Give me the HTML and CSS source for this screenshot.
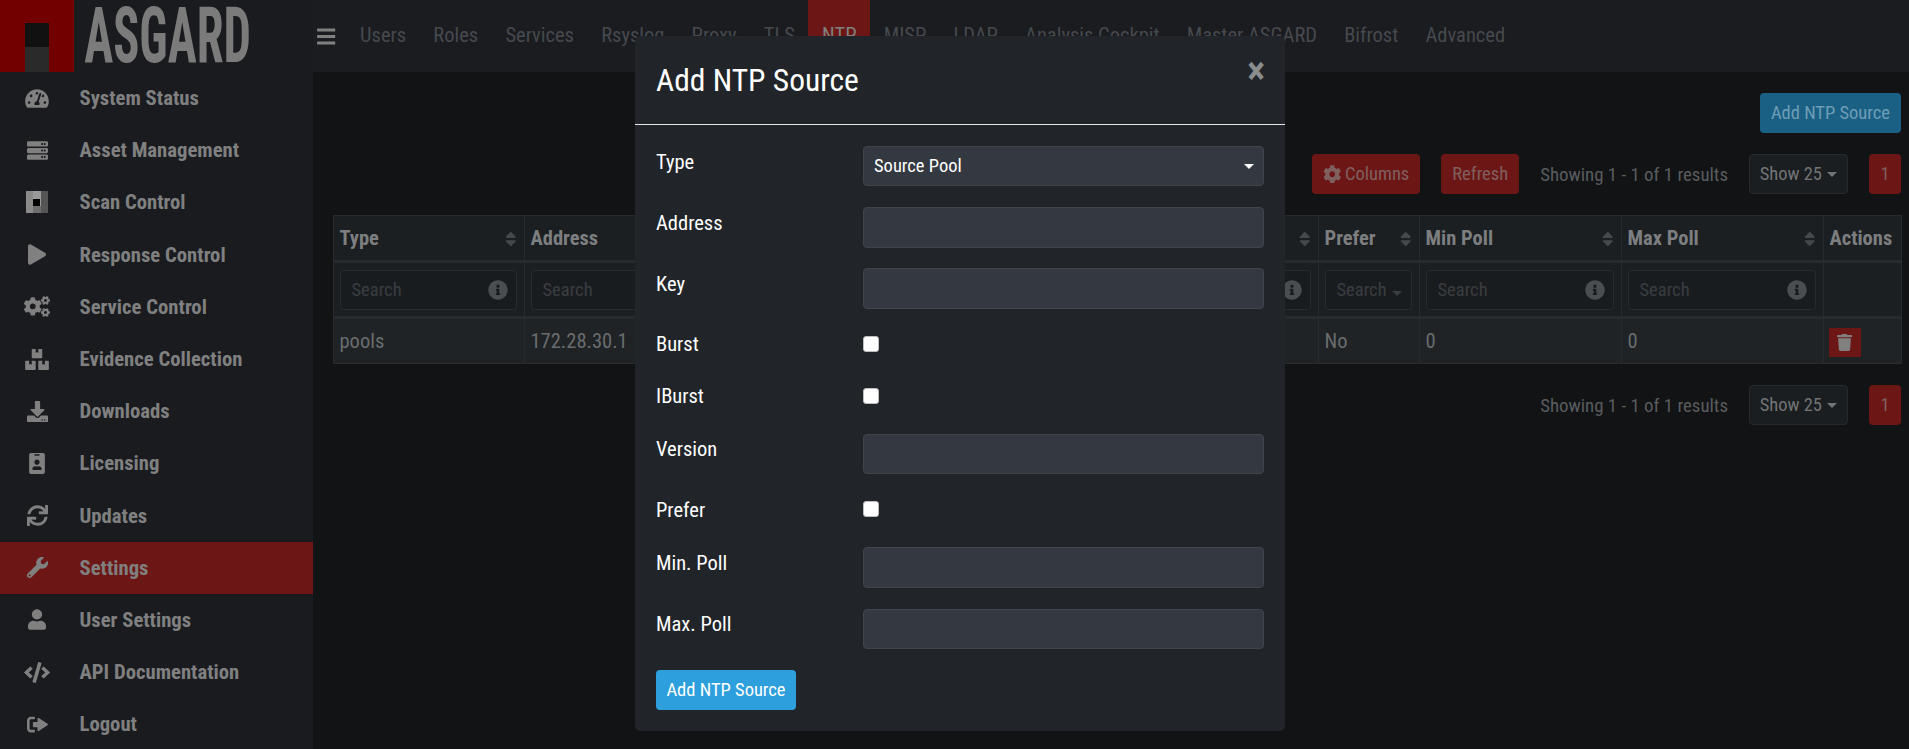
FILE: index.html
```html
<!DOCTYPE html>
<html lang="en">
<head>
<meta charset="utf-8">
<title>ASGARD - NTP</title>
<link rel="stylesheet" href="styles.css">
</head>
<body>
<svg class="defs" aria-hidden="true">
  <symbol id="i-gauge" viewBox="0 0 576 512"><path d="M288 32C128.94 32 0 160.94 0 320c0 52.8 14.25 102.26 39.06 144.8 5.61 9.62 16.3 15.2 27.44 15.2h443c11.14 0 21.83-5.58 27.44-15.2C561.75 422.26 576 372.8 576 320c0-159.06-128.94-288-288-288zm0 64c14.71 0 26.58 10.13 30.32 23.65-1.11 2.26-2.64 4.23-3.45 6.67l-9.22 27.67c-5.13 3.49-10.97 6.01-17.64 6.01-17.67 0-32-14.33-32-32S270.33 96 288 96zM96 384c-17.67 0-32-14.33-32-32s14.33-32 32-32 32 14.33 32 32-14.33 32-32 32zm48-160c-17.67 0-32-14.33-32-32s14.33-32 32-32 32 14.33 32 32-14.33 32-32 32zm246.77-72.41l-61.33 184C343.13 347.33 352 364.54 352 384c0 11.72-3.38 22.55-8.88 32H232.88c-5.5-9.45-8.88-20.28-8.88-32 0-33.94 26.5-61.43 59.9-63.59l61.34-184.01c4.17-12.56 17.73-19.45 30.36-15.17 12.57 4.19 19.35 17.79 15.17 30.36zm14.66 57.2l15.52-46.55c3.47-1.29 7.13-2.23 11.05-2.23 17.67 0 32 14.33 32 32s-14.33 32-32 32c-11.38-.01-20.89-6.28-26.57-15.22zM480 384c-17.67 0-32-14.33-32-32s14.33-32 32-32 32 14.33 32 32-14.33 32-32 32z"/></symbol>
  <symbol id="i-server" viewBox="0 0 512 512"><path d="M480 160H32c-17.673 0-32-14.327-32-32V64c0-17.673 14.327-32 32-32h448c17.673 0 32 14.327 32 32v64c0 17.673-14.327 32-32 32zm-48-88c-13.255 0-24 10.745-24 24s10.745 24 24 24 24-10.745 24-24-10.745-24-24-24zm-64 0c-13.255 0-24 10.745-24 24s10.745 24 24 24 24-10.745 24-24-10.745-24-24-24zm112 248H32c-17.673 0-32-14.327-32-32v-64c0-17.673 14.327-32 32-32h448c17.673 0 32 14.327 32 32v64c0 17.673-14.327 32-32 32zm-48-88c-13.255 0-24 10.745-24 24s10.745 24 24 24 24-10.745 24-24-10.745-24-24-24zm-64 0c-13.255 0-24 10.745-24 24s10.745 24 24 24 24-10.745 24-24-10.745-24-24-24zm112 248H32c-17.673 0-32-14.327-32-32v-64c0-17.673 14.327-32 32-32h448c17.673 0 32 14.327 32 32v64c0 17.673-14.327 32-32 32zm-48-88c-13.255 0-24 10.745-24 24s10.745 24 24 24 24-10.745 24-24-10.745-24-24-24zm-64 0c-13.255 0-24 10.745-24 24s10.745 24 24 24 24-10.745 24-24-10.745-24-24-24z"/></symbol>
  <symbol id="i-play" viewBox="0 0 448 512"><path d="M424.4 214.7L72.4 6.6C43.8-10.3 0 6.1 0 47.9V464c0 37.5 40.7 60.1 72.4 41.3l352-208c31.4-18.5 31.5-64.1 0-82.6z"/></symbol>
  <symbol id="i-cogs" viewBox="0 0 640 512"><path d="M512.1 191l-8.2 14.3c-3 5.3-9.4 7.5-15.1 5.4-11.8-4.4-22.6-10.7-32.1-18.6-4.6-3.8-5.8-10.5-2.8-15.7l8.2-14.3c-6.9-8-12.3-17.3-15.9-27.4h-16.5c-6 0-11.2-4.3-12.2-10.3-2-12-2.1-24.6 0-37.1 1-6 6.2-10.4 12.2-10.4h16.5c3.6-10.1 9-19.4 15.9-27.4l-8.2-14.3c-3-5.2-1.9-11.9 2.8-15.7 9.5-7.9 20.4-14.2 32.1-18.6 5.7-2.1 12.1.1 15.1 5.4l8.2 14.3c10.5-1.9 21.2-1.9 31.7 0L552 6.3c3-5.3 9.4-7.5 15.1-5.4 11.8 4.4 22.6 10.7 32.1 18.6 4.6 3.8 5.8 10.5 2.8 15.7l-8.2 14.3c6.9 8 12.3 17.3 15.9 27.4h16.5c6 0 11.2 4.3 12.2 10.3 2 12 2.1 24.6 0 37.1-1 6-6.2 10.4-12.2 10.4h-16.5c-3.6 10.1-9 19.4-15.9 27.4l8.2 14.3c3 5.2 1.9 11.9-2.8 15.7-9.5 7.9-20.4 14.2-32.1 18.6-5.7 2.1-12.1-.1-15.1-5.4l-8.2-14.3c-10.4 1.9-21.2 1.9-31.7 0zm-10.5-58.8c38.5 29.6 82.4-14.3 52.8-52.8-38.5-29.7-82.4 14.3-52.8 52.8zM386.3 286.1l33.7 16.8c10.1 5.8 14.5 18.1 10.5 29.1-8.9 24.2-26.4 46.4-42.6 65.8-7.4 8.9-20.2 11.1-30.3 5.3l-29.1-16.8c-16 13.7-34.6 24.6-54.9 31.7v33.6c0 11.6-8.3 21.6-19.7 23.6-24.6 4.2-50.4 4.4-75.9 0-11.5-2-20-11.9-20-23.6V418c-20.3-7.2-38.9-18-54.9-31.7L74 403c-10 5.8-22.9 3.6-30.3-5.3-16.2-19.4-33.3-41.6-42.2-65.7-4-10.9.4-23.2 10.5-29.1l33.3-16.8c-3.9-20.9-3.9-42.4 0-63.4L12 205.8c-10.1-5.8-14.6-18.1-10.5-29 8.9-24.2 26-46.4 42.2-65.8 7.4-8.9 20.2-11.1 30.3-5.3l29.1 16.8c16-13.7 34.6-24.6 54.9-31.7V57.1c0-11.5 8.2-21.5 19.6-23.5 24.6-4.2 50.5-4.4 76-.1 11.5 2 20 11.9 20 23.6v33.6c20.3 7.2 38.9 18 54.9 31.7l29.1-16.8c10-5.8 22.9-3.6 30.3 5.3 16.2 19.4 33.2 41.6 42.1 65.8 4 10.9.1 23.2-10 29.1l-33.7 16.8c3.9 21 3.9 42.5 0 63.5zm-117.6 21.1c59.2-77-28.7-164.9-105.7-105.7-59.2 77 28.7 164.9 105.7 105.7zm243.4 182.7l-8.2 14.3c-3 5.3-9.4 7.5-15.1 5.4-11.8-4.4-22.6-10.7-32.1-18.6-4.6-3.8-5.8-10.5-2.8-15.7l8.2-14.3c-6.9-8-12.3-17.3-15.9-27.4h-16.5c-6 0-11.2-4.3-12.2-10.3-2-12-2.1-24.6 0-37.1 1-6 6.2-10.4 12.2-10.4h16.5c3.6-10.1 9-19.4 15.9-27.4l-8.2-14.3c-3-5.2-1.9-11.9 2.8-15.7 9.5-7.9 20.4-14.2 32.1-18.6 5.7-2.1 12.1.1 15.1 5.4l8.2 14.3c10.5-1.9 21.2-1.9 31.7 0l8.2-14.3c3-5.3 9.4-7.5 15.1-5.4 11.8 4.4 22.6 10.7 32.1 18.6 4.6 3.8 5.8 10.5 2.8 15.7l-8.2 14.3c6.9 8 12.3 17.3 15.9 27.4h16.5c6 0 11.2 4.3 12.2 10.3 2 12 2.1 24.6 0 37.1-1 6-6.2 10.4-12.2 10.4h-16.5c-3.6 10.1-9 19.4-15.9 27.4l8.2 14.3c3 5.2 1.9 11.9-2.8 15.7-9.5 7.9-20.4 14.2-32.1 18.6-5.7 2.1-12.1-.1-15.1-5.4l-8.2-14.3c-10.4 1.9-21.2 1.9-31.7 0zM501.6 431c38.5 29.6 82.4-14.3 52.8-52.8-38.5-29.6-82.4 14.3-52.8 52.8z"/></symbol>
  <symbol id="i-boxes" viewBox="0 0 576 512"><path d="M560 288h-80v96l-32-21.3-32 21.3v-96h-80c-8.8 0-16 7.2-16 16v192c0 8.8 7.2 16 16 16h224c8.8 0 16-7.2 16-16V304c0-8.8-7.2-16-16-16zm-384-64h224c8.8 0 16-7.2 16-16V16c0-8.8-7.2-16-16-16h-80v96l-32-21.3L256 96V0h-80c-8.8 0-16 7.2-16 16v192c0 8.8 7.2 16 16 16zm64 64h-80v96l-32-21.3L96 384v-96H16c-8.8 0-16 7.2-16 16v192c0 8.8 7.2 16 16 16h224c8.8 0 16-7.2 16-16V304c0-8.8-7.2-16-16-16z"/></symbol>
  <symbol id="i-download" viewBox="0 0 512 512"><path d="M216 0h80c13.3 0 24 10.7 24 24v168h87.7c17.8 0 26.7 21.5 14.1 34.1L269.7 378.3c-7.5 7.5-19.8 7.5-27.3 0L90.1 226.1c-12.6-12.6-3.7-34.1 14.1-34.1H192V24c0-13.3 10.7-24 24-24zm296 376v112c0 13.3-10.7 24-24 24H24c-13.3 0-24-10.7-24-24V376c0-13.3 10.7-24 24-24h146.7l49 49c20.1 20.1 52.5 20.1 72.6 0l49-49H488c13.3 0 24 10.7 24 24zm-124 88c0-11-9-20-20-20s-20 9-20 20 9 20 20 20 20-9 20-20zm64 0c0-11-9-20-20-20s-20 9-20 20 9 20 20 20 20-9 20-20z"/></symbol>
  <symbol id="i-badge" viewBox="0 0 384 512"><path d="M336 0H48C21.5 0 0 21.5 0 48v416c0 26.5 21.5 48 48 48h288c26.5 0 48-21.5 48-48V48c0-26.5-21.5-48-48-48zM144 32h96c8.8 0 16 7.2 16 16s-7.2 16-16 16h-96c-8.8 0-16-7.2-16-16s7.2-16 16-16zm48 128c35.3 0 64 28.7 64 64s-28.7 64-64 64-64-28.7-64-64 28.7-64 64-64zm112 236.8c0 10.6-10 19.2-22.4 19.2H102.4C90 416 80 407.4 80 396.8v-19.2c0-31.8 30.1-57.6 67.2-57.6h5c12.3 5.1 25.7 8 39.8 8s27.6-2.9 39.8-8h5c37.1 0 67.2 25.8 67.2 57.6v19.2z"/></symbol>
  <symbol id="i-sync" viewBox="0 0 512 512"><path d="M440.65 12.57l4 82.77A247.16 247.16 0 0 0 255.83 8C134.73 8 33.91 94.92 12.29 209.82A12 12 0 0 0 24.09 224h49.05a12 12 0 0 0 11.67-9.26 175.91 175.91 0 0 1 317-56.94l-101.46-4.86a12 12 0 0 0-12.57 12v47.41a12 12 0 0 0 12 12H500a12 12 0 0 0 12-12V12a12 12 0 0 0-12-12h-47.37a12 12 0 0 0-11.98 12.57zM255.83 432a175.61 175.61 0 0 1-146-77.8l101.8 4.87a12 12 0 0 0 12.57-12v-47.4a12 12 0 0 0-12-12H12a12 12 0 0 0-12 12V500a12 12 0 0 0 12 12h47.35a12 12 0 0 0 12-12.6l-4.15-82.57A247.17 247.17 0 0 0 255.83 504c121.11 0 221.93-86.92 243.55-201.82a12 12 0 0 0-11.8-14.18h-49.05a12 12 0 0 0-11.67 9.26A175.86 175.86 0 0 1 255.83 432z"/></symbol>
  <symbol id="i-wrench" viewBox="0 0 512 512"><path d="M507.73 109.1c-2.24-9.03-13.54-12.09-20.12-5.51l-74.36 74.36-67.88-11.31-11.31-67.88 74.36-74.36c6.62-6.62 3.43-17.9-5.66-20.16-47.38-11.74-99.55.91-136.58 37.93-39.64 39.64-50.55 97.1-34.05 147.2L18.74 402.76c-24.99 24.99-24.99 65.51 0 90.5 24.99 24.99 65.51 24.99 90.5 0l213.21-213.21c50.12 16.71 107.47 5.68 147.37-34.22 37.07-37.07 49.7-89.32 37.91-136.73zM64 472c-13.25 0-24-10.75-24-24 0-13.26 10.75-24 24-24s24 10.74 24 24c0 13.25-10.75 24-24 24z"/></symbol>
  <symbol id="i-user" viewBox="0 0 448 512"><path d="M224 256c70.7 0 128-57.3 128-128S294.7 0 224 0 96 57.3 96 128s57.3 128 128 128zm89.6 32h-16.7c-22.2 10.2-46.9 16-72.9 16s-50.6-5.8-72.9-16h-16.7C60.2 288 0 348.2 0 422.4V464c0 26.5 21.5 48 48 48h352c26.5 0 48-21.5 48-48v-41.6c0-74.2-60.2-134.4-134.4-134.4z"/></symbol>
  <symbol id="i-code" viewBox="0 0 640 512"><path d="M278.9 511.5l-61-17.7c-6.4-1.8-10-8.5-8.2-14.9L346.2 8.7c1.8-6.4 8.5-10 14.9-8.2l61 17.7c6.4 1.8 10 8.5 8.2 14.9L293.8 503.3c-1.9 6.4-8.5 10.1-14.9 8.2zm-114-112.2l43.5-46.4c4.6-4.9 4.3-12.7-.8-17.2L117 256l90.6-79.7c5.1-4.5 5.5-12.3.8-17.2l-43.5-46.4c-4.5-4.8-12.1-5.1-17-.5L3.8 247.2c-5.1 4.7-5.1 12.8 0 17.5l144.1 135.1c4.9 4.6 12.5 4.4 17-.5zm327.2.6l144.1-135.1c5.1-4.7 5.1-12.8 0-17.5L492.1 112.1c-4.8-4.5-12.4-4.3-17 .5L431.6 159c-4.6 4.9-4.3 12.7.8 17.2L523 256l-90.6 79.7c-5.1 4.5-5.5 12.3-.8 17.2l43.5 46.4c4.5 4.9 12.1 5.1 17 .6z"/></symbol>
  <symbol id="i-logout" viewBox="0 0 512 512"><path d="M180 448H96c-53 0-96-43-96-96V160c0-53 43-96 96-96h84c6.6 0 12 5.4 12 12v40c0 6.6-5.4 12-12 12H96c-17.7 0-32 14.3-32 32v192c0 17.7 14.3 32 32 32h84c6.6 0 12 5.4 12 12v40c0 6.6-5.4 12-12 12zm117-344l205 136c9.4 9.4 9.4 22.6 0 32L297 408c-15 15-41 4.4-41-17v-71H168c-13.3 0-24-10.7-24-24v-80c0-13.3 10.7-24 24-24h88v-71c0-21.4 26-32 41-17z"/></symbol>
  <symbol id="i-bars" viewBox="0 0 448 512"><path d="M16 132h416c8.837 0 16-7.163 16-16V76c0-8.837-7.163-16-16-16H16C7.163 60 0 67.163 0 76v40c0 8.837 7.163 16 16 16zm0 160h416c8.837 0 16-7.163 16-16v-40c0-8.837-7.163-16-16-16H16c-8.837 0-16 7.163-16 16v40c0 8.837 7.163 16 16 16zm0 160h416c8.837 0 16-7.163 16-16v-40c0-8.837-7.163-16-16-16H16c-8.837 0-16 7.163-16 16v40c0 8.837 7.163 16 16 16z"/></symbol>
  <symbol id="i-cog" viewBox="0 0 512 512"><path d="M487.4 315.7l-42.6-24.6c4.3-23.2 4.3-47 0-70.2l42.6-24.6c4.9-2.8 7.1-8.6 5.5-14-11.1-35.6-30-67.8-54.7-94.6-3.8-4.1-10-5.1-14.8-2.3L380.8 110c-17.9-15.4-38.5-27.3-60.8-35.1V25.8c0-5.6-3.9-10.5-9.4-11.7-36.7-8.2-74.3-7.8-109.2 0-5.5 1.2-9.4 6.1-9.4 11.7V75c-22.2 7.9-42.8 19.8-60.8 35.1L88.7 85.5c-4.9-2.8-11-1.9-14.8 2.3-24.7 26.7-43.6 58.9-54.7 94.6-1.7 5.4.6 11.2 5.5 14L67.3 221c-4.3 23.2-4.3 47 0 70.2l-42.6 24.6c-4.9 2.8-7.1 8.6-5.5 14 11.1 35.6 30 67.8 54.7 94.6 3.8 4.1 10 5.1 14.8 2.3l42.6-24.6c17.9 15.4 38.5 27.3 60.8 35.1v49.2c0 5.6 3.9 10.5 9.4 11.7 36.7 8.2 74.3 7.8 109.2 0 5.5-1.2 9.4-6.1 9.4-11.7v-49.2c22.2-7.9 42.8-19.8 60.8-35.1l42.6 24.6c4.9 2.8 11 1.9 14.8-2.3 24.7-26.7 43.6-58.9 54.7-94.6 1.5-5.5-.7-11.3-5.6-14.1zM256 336c-44.1 0-80-35.9-80-80s35.9-80 80-80 80 35.9 80 80-35.9 80-80 80z"/></symbol>
  <symbol id="i-trash" viewBox="0 0 448 512"><path d="M432 32H312l-9.4-18.7A24 24 0 0 0 281.1 0H166.8a23.72 23.72 0 0 0-21.4 13.3L136 32H16A16 16 0 0 0 0 48v32a16 16 0 0 0 16 16h416a16 16 0 0 0 16-16V48a16 16 0 0 0-16-16zM53.2 467a48 48 0 0 0 47.9 45h245.8a48 48 0 0 0 47.9-45L416 128H32z"/></symbol>
  <symbol id="i-info" viewBox="0 0 512 512"><path d="M256 8C119 8 8 119.1 8 256c0 137 111 248 248 248s248-111 248-248C504 119.1 393 8 256 8zm0 110c23.2 0 42 18.8 42 42s-18.8 42-42 42-42-18.8-42-42 18.8-42 42-42zm56 254c0 6.6-5.4 12-12 12h-88c-6.6 0-12-5.4-12-12v-24c0-6.6 5.4-12 12-12h12v-64h-12c-6.6 0-12-5.4-12-12v-24c0-6.6 5.4-12 12-12h64c6.6 0 12 5.4 12 12v100h12c6.6 0 12 5.4 12 12v24z"/></symbol>
  <symbol id="i-sort" viewBox="0 0 320 512"><path d="M41 288h238c21.4 0 32.1 25.9 17 41L177 448c-9.4 9.4-24.6 9.4-33.9 0L24 329c-15.1-15.1-4.4-41 17-41zm255-105L177 64c-9.4-9.4-24.6-9.4-33.9 0L24 183c-15.1 15.1-4.4 41 17 41h238c21.4 0 32.1-25.9 17-41z"/></symbol>
</svg>

<div class="app">
  <aside class="sidebar">
    <div class="brand">
      <div class="brand-mark"><span class="mark-top"></span><span class="mark-bottom"></span></div>
      <svg class="brand-word" viewBox="0 0 300 72" preserveAspectRatio="none"><text x="17" y="62" textLength="278" lengthAdjust="spacingAndGlyphs">ASGARD</text></svg>
    </div>
    <nav class="side-nav">
      <a class="side-item"><span class="side-icon"><svg class="ico"><use href="#i-gauge"/></svg></span>System Status</a>
      <a class="side-item"><span class="side-icon"><svg class="ico ico-sq"><use href="#i-server"/></svg></span>Asset Management</a>
      <a class="side-item"><span class="side-icon"><span class="scan-icon"><span class="scan-dot"></span></span></span>Scan Control</a>
      <a class="side-item"><span class="side-icon"><svg class="ico ico-play"><use href="#i-play"/></svg></span>Response Control</a>
      <a class="side-item"><span class="side-icon"><svg class="ico ico-wide"><use href="#i-cogs"/></svg></span>Service Control</a>
      <a class="side-item"><span class="side-icon"><svg class="ico"><use href="#i-boxes"/></svg></span>Evidence Collection</a>
      <a class="side-item"><span class="side-icon"><svg class="ico ico-sq"><use href="#i-download"/></svg></span>Downloads</a>
      <a class="side-item"><span class="side-icon"><svg class="ico ico-badge"><use href="#i-badge"/></svg></span>Licensing</a>
      <a class="side-item"><span class="side-icon"><svg class="ico ico-sq"><use href="#i-sync"/></svg></span>Updates</a>
      <a class="side-item is-active"><span class="side-icon"><svg class="ico ico-sq"><use href="#i-wrench"/></svg></span>Settings</a>
      <a class="side-item"><span class="side-icon"><svg class="ico ico-play"><use href="#i-user"/></svg></span>User Settings</a>
      <a class="side-item"><span class="side-icon"><svg class="ico ico-wide"><use href="#i-code"/></svg></span>API Documentation</a>
      <a class="side-item"><span class="side-icon"><svg class="ico ico-sq"><use href="#i-logout"/></svg></span>Logout</a>
    </nav>
  </aside>

  <div class="content">
    <header class="topbar">
      <svg class="burger"><use href="#i-bars"/></svg>
      <a class="top-link">Users</a>
      <a class="top-link">Roles</a>
      <a class="top-link">Services</a>
      <a class="top-link">Rsyslog</a>
      <a class="top-link">Proxy</a>
      <a class="top-link">TLS</a>
      <a class="top-link is-active">NTP</a>
      <a class="top-link">MISP</a>
      <a class="top-link">LDAP</a>
      <a class="top-link">Analysis Cockpit</a>
      <a class="top-link">Master ASGARD</a>
      <a class="top-link">Bifrost</a>
      <a class="top-link">Advanced</a>
    </header>

    <main class="main">
      <div class="add-row"><button class="btn btn-blue-dim">Add NTP Source</button></div>

      <div class="toolbar">
        <button class="btn btn-red"><svg class="btn-ico"><use href="#i-cog"/></svg> Columns</button>
        <button class="btn btn-red">Refresh</button>
        <span class="results">Showing 1 - 1 of 1 results</span>
        <button class="btn btn-dark">Show 25<span class="caret"></span></button>
        <button class="btn btn-red btn-page">1</button>
      </div>

      <table class="grid">
        <colgroup>
          <col class="c-type"><col class="c-addr"><col class="c-key"><col class="c-burst"><col class="c-iburst"><col class="c-version"><col class="c-prefer"><col class="c-min"><col class="c-max"><col class="c-actions">
        </colgroup>
        <thead>
          <tr class="head-row">
            <th>Type<svg class="sort"><use href="#i-sort"/></svg></th>
            <th>Address<svg class="sort"><use href="#i-sort"/></svg></th>
            <th>Key<svg class="sort"><use href="#i-sort"/></svg></th>
            <th>Burst<svg class="sort"><use href="#i-sort"/></svg></th>
            <th>IBurst<svg class="sort"><use href="#i-sort"/></svg></th>
            <th>Version<svg class="sort"><use href="#i-sort"/></svg></th>
            <th>Prefer<svg class="sort"><use href="#i-sort"/></svg></th>
            <th>Min Poll<svg class="sort"><use href="#i-sort"/></svg></th>
            <th>Max Poll<svg class="sort"><use href="#i-sort"/></svg></th>
            <th>Actions</th>
          </tr>
          <tr class="filter-row">
            <td><div class="filter"><input placeholder="Search"><svg class="info"><use href="#i-info"/></svg></div></td>
            <td><div class="filter"><input placeholder="Search"><svg class="info"><use href="#i-info"/></svg></div></td>
            <td><div class="filter"><input placeholder="Search"><svg class="info"><use href="#i-info"/></svg></div></td>
            <td><div class="filter"><span class="filter-select">Search<span class="caret"></span></span></div></td>
            <td><div class="filter"><span class="filter-select">Search<span class="caret"></span></span></div></td>
            <td><div class="filter"><input placeholder="Search"><svg class="info"><use href="#i-info"/></svg></div></td>
            <td><div class="filter filter-sel"><span class="filter-select">Search<span class="caret"></span></span></div></td>
            <td><div class="filter"><input placeholder="Search"><svg class="info"><use href="#i-info"/></svg></div></td>
            <td><div class="filter"><input placeholder="Search"><svg class="info"><use href="#i-info"/></svg></div></td>
            <td></td>
          </tr>
        </thead>
        <tbody>
          <tr class="body-row">
            <td>pools</td>
            <td>172.28.30.1</td>
            <td></td>
            <td>No</td>
            <td>No</td>
            <td></td>
            <td>No</td>
            <td>0</td>
            <td>0</td>
            <td><button class="btn-del"><svg class="del-ico"><use href="#i-trash"/></svg></button></td>
          </tr>
        </tbody>
      </table>

      <div class="toolbar">
        <span class="results">Showing 1 - 1 of 1 results</span>
        <button class="btn btn-dark">Show 25<span class="caret"></span></button>
        <button class="btn btn-red btn-page">1</button>
      </div>
    </main>
  </div>
</div>

<div class="modal">
  <div class="modal-head">
    <h2 class="modal-title">Add NTP Source</h2>
    <button class="modal-close">×</button>
  </div>
  <form class="modal-body">
    <div class="form-row">
      <label class="form-label">Type</label>
      <div class="select-wrap"><select class="field"><option>Source Pool</option></select></div>
    </div>
    <div class="form-row"><label class="form-label">Address</label><input class="field"></div>
    <div class="form-row"><label class="form-label">Key</label><input class="field"></div>
    <div class="form-row form-check"><label class="form-label">Burst</label><input type="checkbox" class="check"></div>
    <div class="form-row form-check"><label class="form-label">IBurst</label><input type="checkbox" class="check"></div>
    <div class="form-row"><label class="form-label">Version</label><input class="field"></div>
    <div class="form-row form-check"><label class="form-label">Prefer</label><input type="checkbox" class="check"></div>
    <div class="form-row"><label class="form-label">Min. Poll</label><input class="field"></div>
    <div class="form-row"><label class="form-label">Max. Poll</label><input class="field"></div>
    <button type="button" class="btn btn-blue">Add NTP Source</button>
  </form>
</div>
</body>
</html>
```
FILE: styles.css
```css
* { box-sizing: border-box; }
html, body { margin: 0; height: 100%; overflow: hidden; }
body { font-family: Roboto, "Liberation Sans", sans-serif; font-stretch: 75%; font-size: 18px; background: #111315; color: #808080; }
input, select, button { font-stretch: 75%; font-family: inherit; }
.defs { position: absolute; width: 0; height: 0; }
a { text-decoration: none; }

.app { display: flex; height: 749px; }

/* sidebar */
.sidebar { width: 313px; flex: none; background: #191b1f; overflow: hidden; }
.brand { display: flex; height: 72px; }
.brand-mark { width: 74px; height: 72px; background: #730000; padding: 23px 25px 0; display: flex; flex-direction: column; }
.mark-top { height: 24px; background: #111; }
.mark-bottom { height: 25px; background: #2a2a2a; }
.brand-word { width: 180px; height: 72px; }
.brand-word text { font-family: Roboto, sans-serif; font-size: 77px; font-weight: 700; fill: #7b7b7b; }
.side-item { display: flex; align-items: center; height: 52.2px; color: #808080; font-size: 20.7px; font-weight: 700; }
.side-item.is-active { background: #6c1716; }
.side-icon { width: 79.5px; padding-right: 5.5px; flex: none; display: flex; justify-content: center; align-items: center; }
.ico { height: 21px; width: 24px; fill: #808080; }
.ico-sq { width: 21px; }
.ico-play { width: 18px; }
.ico-badge { width: 16px; }
.ico-wide { width: 26px; }
.scan-icon { display: block; width: 22px; height: 22px; position: relative; background: linear-gradient(90deg, #8a8a8a 0 32%, #9a9a9a 32% 68%, #555 68% 100%); }
.scan-icon::after { content: ""; position: absolute; left: 7px; top: 15px; width: 8px; height: 7px; background: #6e6e6e; }
.scan-dot { position: absolute; left: 7px; top: 8px; width: 7px; height: 7px; background: #000; }

/* top bar */
.content { flex: 1; min-width: 0; display: flex; flex-direction: column; }
.topbar { height: 72px; flex: none; display: flex; align-items: stretch; background: #1a1c20; padding-left: 4px; }
.burger { width: 18.5px; height: 21px; fill: #808080; align-self: center; margin-right: 11px; }
.top-link { display: flex; align-items: center; padding: 0 13.6px 2px; color: #46494d; font-size: 20.5px; }
.top-link.is-active { background: #6c1716; color: #808080; }

/* main */
.main { flex: 1; padding: 21px 8px 0 20px; background: #111315; display: flex; flex-direction: column; gap: 21px; }
.add-row { display: flex; justify-content: flex-end; }
.toolbar { display: flex; justify-content: flex-end; align-items: center; gap: 21px; }
.btn { height: 40px; border: 1px solid transparent; border-radius: 4px; padding: 0 10px; font-size: 18.5px; display: inline-flex; align-items: center; color: #808080; }
.btn-blue-dim { background: #1a6085; color: #6f9db5; }
.btn-red { background: #6c1716; color: #80605f; }
.btn-dark { background: #1a1e21; border-color: #26292d; color: #727374; }
.btn-page { width: 32px; padding: 0; justify-content: center; }
.btn-blue { background: #2d9fdc; color: #fff; width: 140px; justify-content: center; padding: 0; }
.btn-ico { width: 18.5px; height: 18.5px; fill: #80605f; margin-right: 3px; }
.results { color: #5a5c5e; font-size: 18.85px; width: 187.5px; padding-top: 1px; white-space: nowrap; }
.caret { display: inline-block; width: 0; height: 0; margin-left: 5px; border-top: 5px solid currentColor; border-left: 5px solid transparent; border-right: 5px solid transparent; }

/* table */
.grid { width: 1568px; table-layout: fixed; border-collapse: collapse; font-size: 20.5px; color: #6a6c6e; }
.c-type { width: 191px; } .c-addr { width: 192px; } .c-key { width: 192px; } .c-burst { width: 100px; } .c-iburst { width: 100px; } .c-version { width: 210px; }
.c-prefer { width: 101px; } .c-min { width: 202px; } .c-max { width: 202px; } .c-actions { width: 78px; }
.grid th, .grid td { border: 1px solid #272a2e; padding: 0 5.5px; position: relative; }
.head-row { height: 46px; background: #1b1f22; }
.head-row th { text-align: left; font-weight: 700; border-bottom-width: 3px; color: #7d7e7f; }
.sort { position: absolute; right: 8px; top: 14px; width: 11.5px; height: 18px; fill: #46494c; }
.filter-row { height: 56px; background: #1b1f22; }
.filter-row td { border-bottom-width: 3px; padding-right: 7.5px; }
.filter { display: flex; align-items: center; height: 40px; border: 1px solid #272a2e; border-radius: 4px; background: #191c1f; padding: 0 7.5px 0 11px; }
.filter input { flex: 1; min-width: 0; border: 0; background: none; font: inherit; font-stretch: 75%; font-size: 18.5px; padding: 0; outline: 0; }
.filter input::placeholder { color: #3a3d40; opacity: 1; }
.filter-select { color: #3a3d40; font-size: 18.5px; white-space: nowrap; }
.info { flex: none; width: 20px; height: 20px; fill: #4b4e51; }
.body-row { height: 46px; background: #1f2326; }
.btn-del { width: 32px; height: 29px; margin: 3px 0 0 -1px; border: 0; border-radius: 1px; background: #6c1716; padding: 0; display: flex; align-items: center; justify-content: center; }
.del-ico { width: 15px; height: 17px; fill: #808080; }

/* modal */
.modal { position: fixed; left: 635px; top: 36px; width: 650px; height: 695px; background: #212529; border-radius: 5px; color: #fff; z-index: 10; }
.modal-head { height: 89px; position: relative; border-bottom: 1px solid #e6e6e6; padding: 0 21px; display: flex; align-items: center; }
.modal-title { margin: 0; font-size: 31.5px; font-weight: 400; line-height: 1.2; position: relative; top: 1px; }
.modal-close { position: absolute; right: 20px; top: 15px; border: 0; background: none; padding: 0; color: #8a8c8e; font-size: 38px; font-weight: 700; line-height: 40px; }
.modal-body { padding: 21px; }
.form-row { display: flex; margin-bottom: 20.8px; }
.form-label { width: 207px; flex: none; font-size: 20.5px; line-height: 27px; padding-top: 2.5px; color: #fff; }
.field { width: 401px; height: 40.4px; background: #343840; border: 1px solid #40454c; border-radius: 4px; color: #fff; font: inherit; font-stretch: 75%; font-size: 18.5px; padding: 0 10px; outline: 0; appearance: none; display: block; }
.select-wrap { position: relative; width: 401px; }
.select-wrap::after { content: ""; position: absolute; right: 10px; top: 18px; border-top: 5px solid #fff; border-left: 5px solid transparent; border-right: 5px solid transparent; pointer-events: none; }
.form-check { height: 31.4px; }
.form-check .form-label { padding-top: 1.5px; }
.check { appearance: none; width: 16px; height: 16px; margin: 6px 0 0; background: #fff; border: 1px solid #bdbdbd; border-radius: 3px; }
```
